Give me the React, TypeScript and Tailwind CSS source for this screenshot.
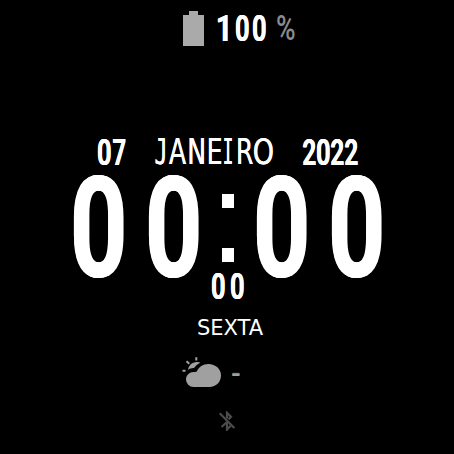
type GlyphProps = {
  char: string;
  cell: string;
  type: string;
};

// One character, squeezed horizontally and centred in its own cell
const Glyph = ({ char, cell, type }: GlyphProps) => (
  <span className={`flex shrink-0 justify-center whitespace-nowrap ${cell}`}>
    <span className={`inline-block shrink-0 ${type}`}>{char}</span>
  </span>
);

const small = "font-['Roboto',sans-serif] text-[36px] leading-[28px] font-semibold [text-shadow:0.6px_0_#fff,-0.6px_0_#fff]";
const big = "font-['Roboto',sans-serif] text-[141.5px] leading-[103px] font-bold scale-x-[0.71] [text-shadow:0.9px_0_#fff,-0.9px_0_#fff]";
const sans = "font-['DejaVu_Sans',sans-serif] text-[36px] leading-[28px] [text-shadow:0.5px_0_#fff]";
const mono = "font-['DejaVu_Sans_Mono',monospace] text-[36px] leading-[28px] [text-shadow:0.5px_0_#fff]";

const month = [
  { char: 'J', cell: 'w-[18.5px]', type: `${mono} scale-x-[0.6]` },
  { char: 'A', cell: 'w-[15.1px]', type: `${sans} scale-x-[0.7]` },
  { char: 'N', cell: 'w-[23px]', type: `${sans} scale-x-[0.7]` },
  { char: 'E', cell: 'w-[13px]', type: `${sans} scale-x-[0.7]` },
  { char: 'I', cell: 'w-[14px]', type: `${mono} scale-x-[0.5]` },
  { char: 'R', cell: 'w-[19.4px]', type: `${sans} scale-x-[0.7]` },
  { char: 'O', cell: 'w-[17.2px]', type: `${sans} scale-x-[0.75]` },
];

const Battery = () => (
  <svg width="21" height="35" viewBox="0 0 21 35" fill="#aaaaaa">
    <path d="M6 0h9v4h6v31H0V4h6z" />
  </svg>
);

const CloudSun = () => (
  <svg width="40" height="31" viewBox="0 0 40 31" fill="#a0a0a0">
    <path d="M11.500 30A7.500 7.500 0 0 1 4 22.500c0-4.300 3.500-7.500 7.500-7.500 1.200 0 2.400 0 3.300-.5C16.500 10 21 7 26.500 7 33.500 7 39 12 39 18.500S34 30 27.500 30z" />
    <path d="M6 12.800C6.500 8.500 10.500 4.800 15 5c1.500 0 2.500.3 3.500.8-2.800 1.400-5 3-6.500 5.200-2.400-.1-4.200.7-6 1.800z" />
    <path d="M0.500 13.700h3M4.500 4.200l2.800 2.600M14.300 0.300v3.200" stroke="#a0a0a0" strokeWidth="2" />
  </svg>
);

const BluetoothOff = () => (
  <svg width="18" height="20" viewBox="0 0 18 20" fill="none" stroke="#4c4c4c" strokeWidth="2.200">
    <path d="M1.700 2.300l14.600 14.700" />
    <path d="M9 7.500V1.800l4 3.900-2.500 2.600M9 11v7.500l3.700-3.800M9 11l-5.500 5" />
  </svg>
);

export default function App() {
  return (
    <div className="flex h-[454px] w-[454px] flex-col overflow-hidden bg-black text-white">

      {/* BATTERY */}
      <div className="mt-[11px] flex h-[35px] items-center pl-[183px]">
        <Battery />
        <div className="ml-[12px] flex pt-px">
          <Glyph char="1" cell="w-[17.5px]" type={`${small} scale-x-[0.8]`} />
          <Glyph char="0" cell="w-[17.5px]" type={`${small} scale-x-[0.7]`} />
          <Glyph char="0" cell="w-[17.5px]" type={`${small} scale-x-[0.7]`} />
        </div>
        <Glyph char="%" cell="ml-[7px] w-[20px] pt-px" type="font-['Roboto',sans-serif] text-[35px] leading-[28px] font-medium scale-x-[0.76] text-[#8c8c8c]" />
      </div>

      {/* DATE */}
      <div className="mt-[92px] flex h-[28px] pl-[97px]">
        <div className="flex pt-px">
          <Glyph char="0" cell="w-[15px]" type={`${small} scale-x-[0.7]`} />
          <Glyph char="7" cell="w-[14px]" type={`${small} scale-x-[0.65]`} />
        </div>
        <div className="ml-[25.2px] flex">
          {month.map(m => <Glyph key={m.char} {...m} />)}
        </div>
        <div className="ml-[31.6px] flex pt-px">
          <Glyph char="2" cell="w-[13.5px]" type={`${small} scale-x-[0.67]`} />
          <Glyph char="0" cell="w-[14.5px]" type={`${small} scale-x-[0.7]`} />
          <Glyph char="2" cell="w-[13.5px]" type={`${small} scale-x-[0.67]`} />
          <Glyph char="2" cell="w-[14px]" type={`${small} scale-x-[0.67]`} />
        </div>
      </div>

      {/* TIME */}
      <div className="mt-[9px] flex h-[103px] pl-[61px]">
        <Glyph char="0" cell="w-[75px] pt-[3px]" type={big} />
        <Glyph char="0" cell="w-[75px] pt-[3px]" type={big} />
        <div className="ml-[11px] flex w-[12px] flex-col gap-[40px] pt-[19px]">
          <span className="h-[14px] bg-white" />
          <span className="h-[14px] bg-white" />
        </div>
        <Glyph char="0" cell="ml-[10px] w-[75px] pt-[3px]" type={big} />
        <Glyph char="0" cell="w-[75px] pt-[3px]" type={big} />
      </div>

      {/* SECONDS */}
      <div className="-mt-[5px] flex h-[28px] pl-[208.500px]">
        <Glyph char="0" cell="w-[19px]" type={`${small} scale-x-[0.7]`} />
        <Glyph char="0" cell="w-[19px]" type={`${small} scale-x-[0.7]`} />
      </div>

      {/* WEEKDAY */}
      <p className="mt-[15px] ml-[6px] h-[24px] text-center font-['DejaVu_Sans',sans-serif] text-[21px] leading-[24px]">SEXTA</p>

      {/* WEATHER */}
      <div className="mt-[17px] flex h-[31px] items-center pl-[182px]">
        <CloudSun />
        <span className="ml-[9px] font-['DejaVu_Sans',sans-serif] text-[27px] leading-[28px] text-[#a0a0a0] [text-shadow:0_-1px_#808080]">-</span>
      </div>

      <div className="mt-[23px] flex h-[20px] pl-[218px]">
        <BluetoothOff />
      </div>
    </div>
  );
}
